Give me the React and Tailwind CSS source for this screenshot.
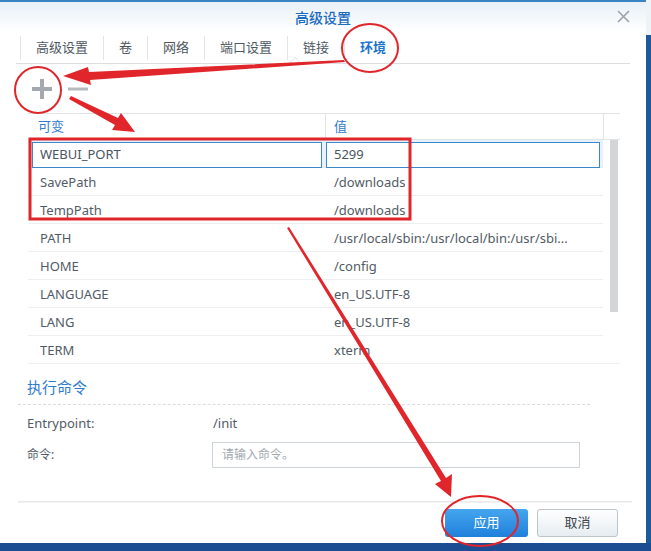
import React from 'react';

const FONT = { fontFamily: '"Noto Sans", "Noto Sans CJK SC", sans-serif' };

const tabs = ['高级设置', '卷', '网络', '端口设置', '链接', '环境'];

const rows = [
    ['SavePath', '/downloads'],
    ['TempPath', '/downloads'],
    ['PATH', '/usr/local/sbin:/usr/local/bin:/usr/sbi...'],
    ['HOME', '/config'],
    ['LANGUAGE', 'en_US.UTF-8'],
    ['LANG', 'en_US.UTF-8'],
    ['TERM', 'xterm'],
];

function Annotations() {
    return (
        <svg className="absolute inset-0 pointer-events-none" width="651" height="551" viewBox="0 0 651 551">
            <g fill="none" stroke="#e0262b" strokeWidth="2">
                <ellipse cx="370" cy="48" rx="28" ry="24" />
                <circle cx="38" cy="90" r="23" />
                <ellipse cx="480" cy="521" rx="38" ry="25" />
            </g>
            <rect x="30" y="139" width="380" height="80" fill="none" stroke="#e0262b" strokeWidth="3" />
            {/* arrow to plus */}
            <polygon fill="#e0262b" points="344,60 345,62 90,80 91,85 63,76 88,67 89,72" />
            {/* arrow to table */}
            <polygon fill="#e0262b" points="69,99 71,96 118,118 121,113 135,132 112,130 115,125" />
            {/* arrow to apply */}
            <polygon fill="#e0262b" points="287,228 289,227 446,478 452,474 451,497 435,484 441,481" />
        </svg>
    );
}

export default function App() {
    return (
        <div className="relative w-[651px] h-[551px] overflow-hidden bg-[#1c4d92] text-[13px] text-[#515b66]" style={FONT}>
            <div className="flex h-[543px]">
                <div className="w-[646px] h-full bg-white flex flex-col border-t-2 border-[#3a84c4]">
                    {/* title */}
                    <div className="h-[30px] flex items-center justify-center relative bg-gradient-to-b from-[#e8f0f7] to-white">
                        <span className="text-[14px] text-[#1b6bbf] font-medium">高级设置</span>
                        <svg className="absolute right-[16px] top-[8px]" width="13" height="13" viewBox="0 0 13 13">
                            <path d="M1 1l11 11M12 1L1 12" stroke="#9aa3ab" strokeWidth="1.6" />
                        </svg>
                    </div>
                    {/* tabs */}
                    <div className="mx-4 h-[32px] flex items-center border-b border-[#dcdfe2] relative">
                        {tabs.map((t, i) => (
                            <div key={t} className={`h-[24px] flex items-center px-[15px] border-l border-[#e2e5e8] ${i === 0 ? 'ml-[4px]' : ''} ${t === '环境' ? 'text-[#1e75cc] font-semibold' : 'text-[#4e5862]'}`}>
                                {t}
                            </div>
                        ))}
                        <div className="absolute left-[272px] bottom-[-1px] w-0 h-0 border-l-[7px] border-r-[7px] border-b-[7px] border-l-transparent border-r-transparent border-b-[#dcdfe2]" />
                        <div className="absolute left-[273px] bottom-[-1px] w-0 h-0 border-l-[6px] border-r-[6px] border-b-[6px] border-l-transparent border-r-transparent border-b-white" />
                    </div>
                    {/* toolbar */}
                    <div className="h-[49px] flex items-center pl-[31px] gap-[15px]">
                        <svg width="22" height="22" viewBox="0 0 22 22"><path d="M11 1v20M1 11h20" stroke="#a3a9ae" strokeWidth="4" /></svg>
                        <svg width="20" height="22" viewBox="0 0 20 22"><path d="M0 11h20" stroke="#b4b9bd" strokeWidth="3" /></svg>
                    </div>
                    {/* table */}
                    <div className="ml-[28px] w-[592px] flex flex-col">
                        <div className="h-[27px] flex border-t border-b border-[#e1e4e7] text-[#2f7bcc]">
                            <div className="w-[297px] pl-[10px] flex items-center">可变</div>
                            <div className="w-[278px] pl-[8px] flex items-center border-l border-[#e1e4e7]">值</div>
                            <div className="flex-1 border-l border-[#e1e4e7]" />
                        </div>
                        <div className="flex">
                            <div className="w-[575px] flex flex-col">
                                <div className="h-[28px] flex items-center bg-[#e6f1fb] border-b border-[#e8eaec] pt-[2px]">
                                    <div className="ml-[4px] w-[290px] h-[26px] border border-[#3b87cc] bg-white flex items-center pl-[7px] text-[#4a545e]">WEBUI_PORT</div>
                                    <div className="ml-[4px] w-[274px] h-[26px] border border-[#3b87cc] bg-white flex items-center pl-[7px] text-[#4a545e]">5299</div>
                                </div>
                                {rows.map(([k, v]) => (
                                    <div key={k} className="h-[28px] flex items-center pt-[2px] border-b border-[#eceef0]">
                                        <div className="w-[297px] pl-[12px]">{k}</div>
                                        <div className="pl-[9px]">{v}</div>
                                    </div>
                                ))}
                            </div>
                            <div className="flex-1 border-b border-[#eceef0] pl-[7px]">
                                <div className="w-[8px] h-[172px] bg-[#d3d5d7]" />
                            </div>
                        </div>
                    </div>
                    {/* command section */}
                    <div className="mt-[13px] ml-[27px] text-[15px] text-[#2f7bcc] leading-[20px]">执行命令</div>
                    <div className="mt-[7px] ml-[18px] w-[572px] border-t border-dashed border-[#dadde0]" />
                    <div className="h-[30px] mt-[4px] flex items-center pl-[27px]">
                        <div className="w-[186px]">Entrypoint:</div>
                        <div>/init</div>
                    </div>
                    <div className="h-[32px] flex items-center pl-[27px]">
                        <div className="w-[185px] text-[12px]">命令:</div>
                        <div className="w-[368px] h-[26px] border border-[#cfd4d8] flex items-center pl-[9px] text-[12px] text-[#a3a9ae]">请输入命令。</div>
                    </div>
                    <div className="flex-1" />
                    <div className="ml-[18px] w-[614px] h-[2px] bg-gradient-to-b from-[#e4e6e8] to-[#f4f5f6]" />
                    <div className="h-[40px] flex items-center justify-end pr-[28px] gap-[9px]">
                        <div className="w-[83px] h-[28px] rounded-[3px] bg-gradient-to-b from-[#44a6ee] to-[#1f80dc] text-white flex items-center justify-center">应用</div>
                        <div className="w-[81px] h-[28px] rounded-[3px] border border-[#bcc5cd] bg-gradient-to-b from-white to-[#e6ecf1] text-[#3c444c] flex items-center justify-center">取消</div>
                    </div>
                </div>
                <div className="flex-1 flex flex-col">
                    <div className="h-[35px] bg-[#eef3f8]" />
                    <div className="flex-1 bg-[#1c5a9a]" />
                </div>
            </div>
            <Annotations />
        </div>
    );
}
